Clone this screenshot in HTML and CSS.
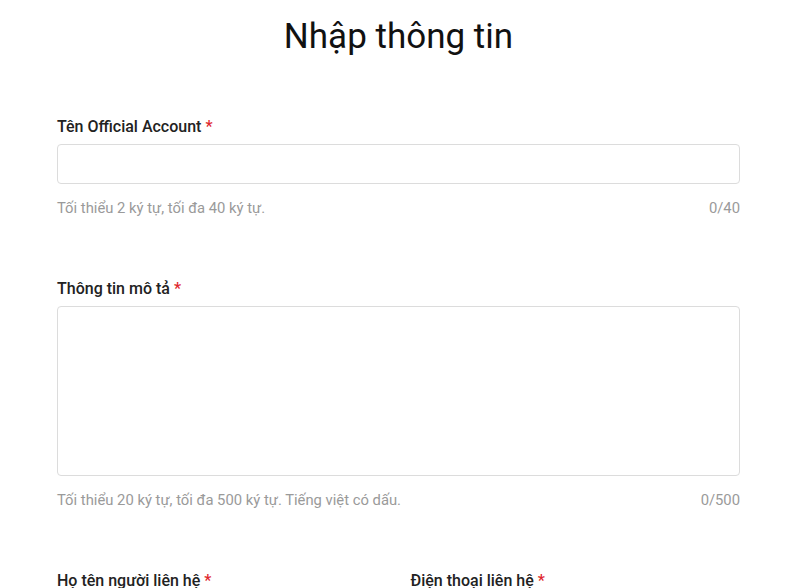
FILE: index.html
```html
<!DOCTYPE html>
<html lang="vi">
<head>
  <meta charset="UTF-8">
  <title>Nhập thông tin</title>
  <meta name="viewport" content="width=device-width, initial-scale=1.0">
  <link rel="stylesheet" href="styles.css">
</head>
<body>
  <div id="info-form">
    <h1>Nhập thông tin</h1>

    <div class="field">
      <label class="field-label" for="oa-name">Tên Official Account <span class="req">*</span></label>
      <input id="oa-name" class="field-input" type="text" maxlength="40">
      <div class="field-hint">
        <span>Tối thiểu 2 ký tự, tối đa 40 ký tự.</span>
        <span class="count">0/40</span>
      </div>
    </div>

    <div class="field">
      <label class="field-label" for="oa-desc">Thông tin mô tả <span class="req">*</span></label>
      <textarea id="oa-desc" class="field-input field-area" maxlength="500"></textarea>
      <div class="field-hint">
        <span>Tối thiểu 20 ký tự, tối đa 500 ký tự. Tiếng việt có dấu.</span>
        <span class="count">0/500</span>
      </div>
    </div>

    <div class="field-row">
      <div class="field">
        <label class="field-label" for="contact-name">Họ tên người liên hệ <span class="req">*</span></label>
        <input id="contact-name" class="field-input" type="text">
      </div>
      <div class="field">
        <label class="field-label" for="contact-phone">Điện thoại liên hệ <span class="req">*</span></label>
        <input id="contact-phone" class="field-input" type="text">
      </div>
    </div>
  </div>
</body>
</html>
```

FILE: styles.css
```css
body {
  font-family: Roboto, 'Liberation Sans', Arial, sans-serif;
  background: #fff;
  color: #222;
  margin: 0;
  padding: 0;
}
#info-form {
  width: 683px;
  margin: 0 0 0 57px;
  padding-top: 15px;
}
#info-form h1 {
  margin: 0 0 58px 0;
  font-size: 35px;
  line-height: 44px;
  font-weight: 400;
  color: #111;
  text-align: center;
}
.field {
  margin-bottom: 62px;
}
.field-label {
  display: block;
  font-size: 16px;
  line-height: 20px;
  font-weight: 500;
  color: #222;
  margin-bottom: 7px;
}
.req {
  color: #e0282e;
}
.field-input {
  display: block;
  box-sizing: border-box;
  width: 100%;
  height: 40px;
  border: 1px solid #dcdcdc;
  border-radius: 4px;
  padding: 8px 12px;
  font-family: inherit;
  font-size: 14px;
  outline: none;
  resize: none;
}
.field-area {
  height: 170px;
}
.field-hint {
  display: flex;
  justify-content: space-between;
  margin-top: 15px;
  font-size: 14.8px;
  line-height: 18px;
  color: #9a9a9a;
}
.field-row {
  display: grid;
  grid-template-columns: 1fr 1fr;
  gap: 24px;
}
```
